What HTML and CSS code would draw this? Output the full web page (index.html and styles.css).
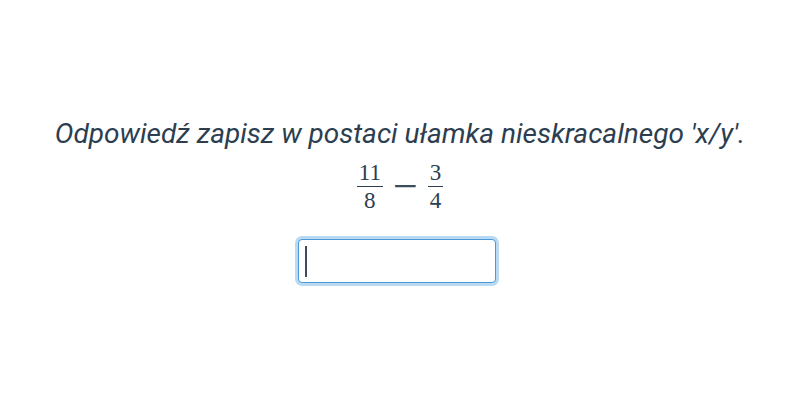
FILE: index.html
```html
<!DOCTYPE html>
<html lang="pl">
<head>
    <meta charset="UTF-8">
    <meta name="viewport" content="width=device-width, initial-scale=1.0">
    <title>Zadanie - ułamki</title>
    <link rel="stylesheet" href="styles.css">
</head>
<body>
    <div class="task">
        <p class="task-prompt">Odpowiedź zapisz w postaci ułamka nieskracalnego 'x/y'.</p>

        <div class="task-expr">
            <span class="frac">
                <span class="frac-num">11</span>
                <span class="frac-den">8</span>
            </span>
            <span class="op">&minus;</span>
            <span class="frac">
                <span class="frac-num">3</span>
                <span class="frac-den">4</span>
            </span>
        </div>

        <div class="answer">
            <input class="answer-input" type="text" autofocus>
            <span class="caret"></span>
        </div>
    </div>
</body>
</html>
```

FILE: styles.css
```css
body {
    margin: 0;
    padding: 0;
    font-family: 'Roboto', 'Liberation Sans', sans-serif;
    background: #ffffff;
    color: #2c3e50;
    min-height: 100vh;
}

.task {
    padding-top: 114px;
    display: flex;
    flex-direction: column;
    align-items: center;
}

.task-prompt {
    margin: 0;
    font-size: 28px;
    font-style: italic;
    line-height: 40px;
    color: #2c3e50;
}

/* math expression */
.task-expr {
    margin-top: 8px;
    display: flex;
    align-items: center;
    gap: 10px;
    color: #2c3e50;
}

.frac {
    display: inline-flex;
    flex-direction: column;
    align-items: center;
    font-family: 'Liberation Serif', serif;
    font-size: 23px;
    line-height: 22px;
}

.frac-num {
    padding: 0 2px 2px;
    border-bottom: 1.5px solid #2c3e50;
}

.frac-den {
    padding-top: 3px;
}

.op {
    font-family: 'Liberation Serif', serif;
    font-size: 44px;
    line-height: 26px;
    color: #3a4c5e;
}

.answer {
    position: relative;
    margin-top: 27px;
    margin-right: 7px;
}

.answer-input {
    display: block;
    box-sizing: border-box;
    width: 198px;
    height: 44px;
    border: 1px solid #4a9ad8;
    border-radius: 4px;
    padding: 0 8px;
    font-family: 'Roboto', sans-serif;
    font-size: 24px;
    color: #2c3e50;
    outline: none;
    caret-color: transparent;
    box-shadow: 0 0 0 3px #b9daf2;
}

.caret {
    position: absolute;
    left: 7px;
    top: 7px;
    width: 2px;
    height: 31px;
    background: #3d4b5c;
}
```
